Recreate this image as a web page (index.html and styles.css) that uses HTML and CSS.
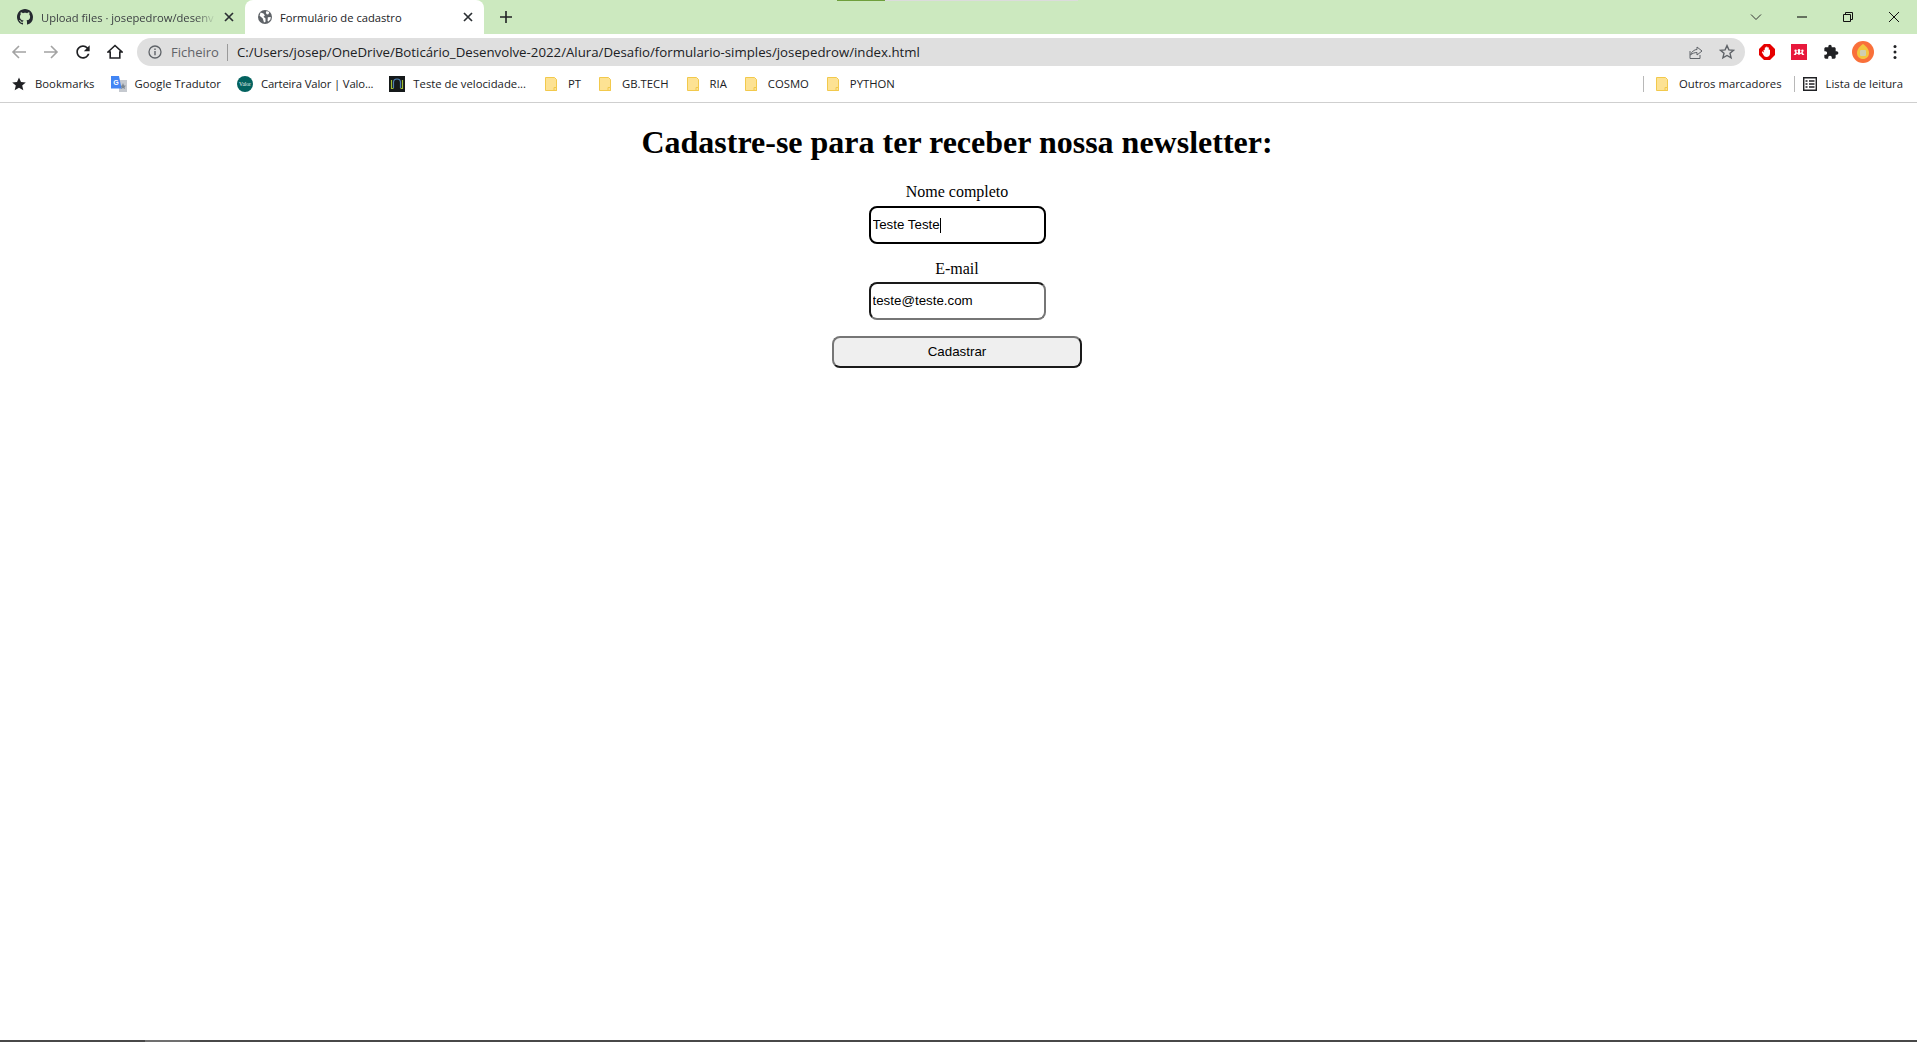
FILE: index.html
```html
<!DOCTYPE html>
<html lang="pt">
<head>
  <meta charset="UTF-8">
  <meta name="viewport" content="width=device-width, initial-scale=1.0">
  <title>Formulário de cadastro</title>
  <link rel="stylesheet" href="styles.css">
</head>
<body>
  <svg class="defs" width="0" height="0">
    <symbol id="folder" viewBox="0 0 12 14">
      <path d="M.5.5h9l2 2v11H.5z" fill="#fde293" stroke="#f2c94c"/>
      <path d="M9 13.5v-3h2.5v3z" fill="#fde293" stroke="#f2c94c"/>
    </symbol>
  </svg>

  <!-- browser window -->
  <div class="tabstrip">
    <div class="tab">
      <svg class="favicon" viewBox="0 0 16 16"><path fill="#24292f" d="M8 0C3.58 0 0 3.58 0 8c0 3.54 2.29 6.53 5.47 7.59.4.07.55-.17.55-.38 0-.19-.01-.82-.01-1.49-2.01.37-2.53-.49-2.69-.94-.09-.23-.48-.94-.82-1.13-.28-.15-.68-.52-.01-.53.63-.01 1.08.58 1.23.82.72 1.21 1.87.87 2.33.66.07-.52.28-.87.51-1.07-1.78-.2-3.64-.89-3.64-3.95 0-.87.31-1.59.82-2.15-.08-.2-.36-1.02.08-2.12 0 0 .67-.21 2.2.82.64-.18 1.32-.27 2-.27.68 0 1.36.09 2 .27 1.53-1.04 2.2-.82 2.2-.82.44 1.1.16 1.92.08 2.12.51.56.82 1.27.82 2.15 0 3.07-1.87 3.75-3.65 3.95.29.25.54.73.54 1.48 0 1.07-.01 1.93-.01 2.2 0 .21.15.46.55.38A8.013 8.013 0 0016 8c0-4.42-3.58-8-8-8z"/></svg>
      <span class="tab-title tab-title-fade">Upload files · josepedrow/desenv</span>
      <svg class="tab-close" viewBox="0 0 10 10"><path d="M1 1l8 8M9 1l-8 8" stroke="#2b2f33" stroke-width="1.7" fill="none"/></svg>
    </div>
    <div class="tab tab-active">
      <svg class="favicon" viewBox="0 0 16 16"><circle cx="8" cy="8" r="7" fill="#5f6368"/><path fill="#fff" d="M3.500 3.600l3 .9 1.400 2-1.400 1.300 2 1.800v3.200l-1.500.6-1.200-3.800-3.200-2.800zM9.500 2l2.800 1-.8 2.200-1.500.2L8.800 4zM10.800 8.200l3-.3-.4 2.700-2 2-.8-.6z"/></svg>
      <span class="tab-title">Formulário de cadastro</span>
      <svg class="tab-close" viewBox="0 0 10 10"><path d="M1 1l8 8M9 1l-8 8" stroke="#2b2f33" stroke-width="1.7" fill="none"/></svg>
    </div>
    <svg class="new-tab" viewBox="0 0 12 12"><path d="M6 0v12M0 6h12" stroke="#202124" stroke-width="1.6"/></svg>
    <div class="loader"><span class="loader-on"></span><span class="loader-off"></span></div>
    <div class="win-controls">
      <svg viewBox="0 0 12 12"><path d="M1 3.500l5 5 5-5" stroke="#333" fill="none"/></svg>
      <svg viewBox="0 0 12 12"><path d="M1 6h10" stroke="#111" stroke-width="1.100" fill="none"/></svg>
      <svg viewBox="0 0 12 12"><path d="M3.500 3V1.500h7v7H9M1.500 3.500h7v7h-7z" stroke="#111" fill="none"/></svg>
      <svg viewBox="0 0 12 12"><path d="M1 1l10 10M11 1L1 11" stroke="#111" fill="none"/></svg>
    </div>
  </div>

  <div class="toolbar">
    <svg class="tool" viewBox="0 0 16 16"><path d="M15 8H2M8 2L2 8l6 6" stroke="#a3a3a3" stroke-width="1.600" fill="none"/></svg>
    <svg class="tool" viewBox="0 0 16 16"><path d="M1 8h13M8 2l6 6-6 6" stroke="#a3a3a3" stroke-width="1.600" fill="none"/></svg>
    <svg class="tool tool-reload" viewBox="0 0 24 24"><path fill="#202124" d="M17.650 6.350C16.200 4.900 14.210 4 12 4c-4.420 0-7.990 3.580-7.990 8s3.570 8 7.990 8c3.730 0 6.840-2.550 7.730-6h-2.080c-.82 2.330-3.040 4-5.650 4-3.310 0-6-2.690-6-6s2.690-6 6-6c1.660 0 3.140.69 4.220 1.780L13 11h7V4l-2.350 2.350z"/></svg>
    <svg class="tool" viewBox="0 0 16 16"><path d="M1 8l7-6.500L15 8h-2.200v6H3.200V8z" stroke="#202124" stroke-width="1.600" fill="none"/></svg>
    <div class="omnibox">
      <svg class="omni-info" viewBox="0 0 14 14"><circle cx="7" cy="7" r="6" stroke="#5f6368" stroke-width="1.300" fill="none"/><path d="M7 6v4.200M7 3.400v1.500" stroke="#5f6368" stroke-width="1.400"/></svg>
      <span class="omni-scheme">Ficheiro</span>
      <span class="omni-url">C:/Users/josep/OneDrive/Boticário_Desenvolve-2022/Alura/Desafio/formulario-simples/josepedrow/index.html</span>
      <svg class="omni-icon" viewBox="0 0 16 16"><path d="M3 7v7.500h10V11M3.500 11C4.500 7.500 7.500 5.500 10 5.500V3L15 7l-5 4V8.500C7.500 8.500 5 9.500 3.500 11z" stroke="#5f6368" fill="none"/></svg>
      <svg class="omni-icon" viewBox="0 0 16 16"><path d="M8 1.600l1.900 4.300 4.600.4-3.500 3 1.100 4.600L8 11.500l-4.100 2.400L5 9.300l-3.500-3 4.600-.4z" stroke="#5f6368" stroke-width="1.400" fill="none"/></svg>
    </div>
    <svg class="ext" viewBox="0 0 16 16"><path fill="#e60000" d="M5 0h6l5 5v6l-5 5H5l-5-5V5z"/><path fill="#fff" d="M4.500 6.500c0-1 1.200-1 1.300 0V4c0-1 1.300-1 1.300 0V3.200c0-1 1.400-1 1.400 0V4c0-1 1.300-1 1.300 0v2c0-.8 1.200-.8 1.200 0v3.500c0 2-1.500 3.500-3.500 3.500-1.500 0-2.500-.8-3-2l-1.500-2.500c-.4-.8.600-1.400 1.200-.8l1 1z"/></svg>
    <svg class="ext" viewBox="0 0 16 16"><rect width="16" height="16" fill="#e8193c"/><circle cx="8" cy="6.200" r="1.300" fill="#fff"/><circle cx="4.600" cy="6.800" r="1.200" fill="#fff"/><circle cx="11.400" cy="6.800" r="1.200" fill="#fff"/><path fill="#fff" d="M2.500 11c1.200-.6 1.300-2.500 2.100-3.200l2.400 1.200V7h2v2l2.400-1.200c.8.7.9 2.600 2.100 3.200h-2.300l-1-1.500L8 11 5.800 9.500l-1 1.500z"/></svg>
    <svg class="ext" viewBox="0 0 24 24"><path fill="#202124" d="M20.500 11H19V7c0-1.100-.9-2-2-2h-4V3.500C13 2.120 11.880 1 10.500 1S8 2.120 8 3.500V5H4c-1.100 0-1.990.9-1.990 2v3.800H3.500c1.490 0 2.700 1.210 2.700 2.700s-1.210 2.700-2.700 2.700H2V20c0 1.100.9 2 2 2h3.800v-1.500c0-1.490 1.210-2.700 2.700-2.700 1.490 0 2.700 1.210 2.700 2.700V22H17c1.100 0 2-.9 2-2v-4h1.500c1.380 0 2.500-1.120 2.500-2.500S21.880 11 20.500 11z"/></svg>
    <svg class="ext avatar" viewBox="0 0 22 22"><circle cx="11" cy="11" r="11" fill="#f9703a"/><path fill="#f3c63f" d="M11 3c3 2 6 5 6 9 0 3.500-2.500 6-6 6s-6-2.500-6-6c0-4 3-7 6-9z"/><rect x="8" y="9" width="6" height="6" rx="1" fill="#cfcfb0"/></svg>
    <svg class="ext dots" viewBox="0 0 4 16"><circle cx="2" cy="2.500" r="1.500" fill="#202124"/><circle cx="2" cy="8" r="1.500" fill="#202124"/><circle cx="2" cy="13.500" r="1.500" fill="#202124"/></svg>
  </div>

  <div class="bookmarks">
    <a class="mark">
      <svg class="mark-icon" viewBox="0 0 16 16"><path fill="#202124" d="M8 1.500l2 4.500 4.800.4-3.600 3.200 1.100 4.700L8 11.800l-4.300 2.500 1.100-4.700L1.200 6.400 6 6z"/></svg>
      Bookmarks
    </a>
    <a class="mark">
      <svg class="mark-icon" viewBox="0 0 16 16"><path fill="#c5c9cf" d="M8 4h8v12H8z"/><path fill="#7d8791" d="M12 7l1 2.500 2 .2-1.500 1.300.5 2-2-1.100-2 1.100.5-2L9 9.700l2-.2z"/><path fill="#4285f4" d="M0 0h8l2.500 12.500H0z"/><text x="2.200" y="8.500" class="g-letter">G</text></svg>
      Google Tradutor
    </a>
    <a class="mark mark-narrow">
      <svg class="mark-icon" viewBox="0 0 16 16"><circle cx="8" cy="8" r="8" fill="#03625f"/><text x="8" y="9.800" class="valor-letters">Valor</text></svg>
      Carteira Valor | Valo...
    </a>
    <a class="mark mark-speed">
      <svg class="mark-icon" viewBox="0 0 16 16"><rect width="16" height="16" fill="#15191a"/><path d="M4.500 12V6.500a3.500 3.500 0 017 0V12" stroke="#4d7fb3" stroke-width="1.200" fill="none"/><path d="M2.500 4v8.500h2M13.500 4v8.500h-2" stroke="#9dbb32" stroke-width="1.200" fill="none"/></svg>
      Teste de velocidade...
    </a>
    <a class="mark mark-folder"><svg class="folder-icon"><use href="#folder"/></svg>PT</a>
    <a class="mark mark-folder"><svg class="folder-icon"><use href="#folder"/></svg>GB.TECH</a>
    <a class="mark mark-folder"><svg class="folder-icon"><use href="#folder"/></svg>RIA</a>
    <a class="mark mark-folder"><svg class="folder-icon"><use href="#folder"/></svg>COSMO</a>
    <a class="mark mark-folder"><svg class="folder-icon"><use href="#folder"/></svg>PYTHON</a>
    <span class="mark-sep mark-sep-first"></span>
    <a class="mark mark-folder mark-other"><svg class="folder-icon"><use href="#folder"/></svg>Outros marcadores</a>
    <span class="mark-sep mark-sep-last"></span>
    <a class="mark mark-reading">
      <svg class="mark-icon" viewBox="0 0 14 14"><path d="M.7.7h12.600v12.600H.7z" stroke="#202124" stroke-width="1.400" fill="none"/><path d="M2.500 4h2M6 4h5.500M2.500 7h2M6 7h5.500M2.500 10h2M6 10h5.500" stroke="#202124" stroke-width="1.300"/></svg>
      Lista de leitura
    </a>
  </div>

  <!-- the page itself -->
  <main class="page">
    <h1>Cadastre-se para ter receber nossa newsletter:</h1>
    <form class="form">
      <label class="label-first" for="nome">Nome completo</label>
      <div class="field">
        <input class="input input-focus" type="text" id="nome" value="Teste Teste">
        <span class="caret"></span>
      </div>
      <label for="email">E-mail</label>
      <div class="field">
        <input class="input" type="email" id="email" value="teste@teste.com">
      </div>
      <button class="btn" type="button">Cadastrar</button>
    </form>
  </main>

  <div class="taskbar"><span class="taskbar-thumb"></span></div>
</body>
</html>
```

FILE: styles.css
```css
* {
  box-sizing: border-box;
}

html, body {
  height: 100%;
}

body {
  margin: 0;
  display: flex;
  flex-direction: column;
  overflow: hidden;
  background-color: #fff;
  font-family: "Liberation Serif", serif;
}

.defs {
  position: absolute;
}

/* tabs */
.tabstrip {
  height: 34px;
  flex: none;
  display: flex;
  align-items: center;
  position: relative;
  background-color: #cce9bf;
  font-family: "Open Sans", sans-serif;
  font-size: 11.200px;
  color: #3c4043;
}

.tab {
  width: 245px;
  height: 34px;
  flex: none;
  display: flex;
  align-items: center;
  padding: 0 11px 0 17px;
}

.tab-active {
  width: 239px;
  padding: 0 11px 0 12px;
  background-color: #fff;
  border-radius: 8px 8px 0 0;
  color: #202124;
}

.favicon {
  width: 16px;
  height: 16px;
  flex: none;
}

.tab-title {
  flex: 1;
  margin: 0 8px;
  white-space: nowrap;
}

.tab-title-fade {
  -webkit-mask-image: linear-gradient(to right, #000 88%, transparent);
  mask-image: linear-gradient(to right, #000 88%, transparent);
}

.tab-active .tab-title {
  margin-left: 7px;
}

.tab-close {
  width: 10px;
  height: 10px;
  flex: none;
}

.new-tab {
  width: 12px;
  height: 12px;
  margin-left: 16px;
  flex: none;
}

.loader {
  position: absolute;
  top: 0;
  left: 837px;
  display: flex;
  height: 1px;
}

.loader-on {
  width: 48px;
  background-color: #6f9f3c;
}

.loader-off {
  width: 193px;
  background-color: #dcdcdc;
}

.win-controls {
  margin-left: auto;
  display: flex;
  align-items: center;
  gap: 34px;
  padding-right: 17px;
}

.win-controls svg {
  width: 12px;
  height: 12px;
}

/* toolbar */
.toolbar {
  height: 34px;
  flex: none;
  display: flex;
  align-items: center;
  padding: 2px 0 0 11px;
}

.tool {
  width: 16px;
  height: 16px;
  flex: none;
  margin-right: 16px;
}

.tool-reload {
  width: 20px;
  height: 20px;
  margin: 0 14px 0 -2px;
}

.omnibox {
  width: 1608px;
  height: 28px;
  flex: none;
  margin-left: -2px;
  margin-right: 14px;
  padding: 0 10px 0 11px;
  display: flex;
  align-items: center;
  background-color: #dfdfdf;
  border-radius: 14px;
  font-family: "Open Sans", sans-serif;
  font-size: 13.250px;
  white-space: nowrap;
}

.omni-info {
  width: 14px;
  height: 14px;
  flex: none;
  margin-right: 9px;
}

.omni-scheme {
  color: #5f6368;
  font-size: 13px;
  padding-right: 8px;
  margin-right: 9px;
  border-right: 1px solid #9a9a9a;
  line-height: 17px;
}

.omni-url {
  color: #202124;
  flex: 1;
}

.omni-icon {
  width: 16px;
  height: 16px;
  flex: none;
  margin-left: 16px;
}

.ext {
  width: 16px;
  height: 16px;
  flex: none;
  margin-right: 16px;
}

.avatar {
  width: 22px;
  height: 22px;
  margin: 0 19px 0 -3px;
}

.dots {
  width: 4px;
}

/* bookmarks bar */
.bookmarks {
  height: 35px;
  flex: none;
  display: flex;
  align-items: center;
  padding: 0 14px 3px 11px;
  border-bottom: 1px solid #cfcfcf;
  font-family: "Open Sans", sans-serif;
  font-size: 11.300px;
  color: #202124;
  white-space: nowrap;
}

.mark {
  display: flex;
  align-items: center;
  margin-right: 16px;
}

.mark-narrow {
  letter-spacing: -0.15px;
}

.mark-speed {
  margin-right: 19px;
}

.mark-icon {
  width: 16px;
  height: 16px;
  flex: none;
  margin-right: 8px;
}

.g-letter {
  font-family: "Liberation Sans", sans-serif;
  font-size: 7px;
  font-weight: bold;
  fill: #fff;
}

.valor-letters {
  font-family: "Liberation Serif", serif;
  font-size: 5.500px;
  letter-spacing: 0;
  text-anchor: middle;
  fill: #e8f3f2;
}

.folder-icon {
  width: 12px;
  height: 14px;
  flex: none;
  margin-right: 11px;
}

.mark-folder {
  margin-right: 18px;
}

.mark-other {
  margin-right: 12px;
}

.mark-sep {
  width: 1px;
  height: 16px;
  background-color: #b8b8b8;
  margin-right: 12px;
}

.mark-sep-first {
  margin-left: auto;
}

.mark-sep-last {
  margin-right: 8px;
}

.mark-reading {
  margin-right: 0;
}

.mark-reading .mark-icon {
  width: 14px;
  height: 14px;
  margin-right: 9px;
}

/* page content */
.page {
  flex: 1;
  padding-right: 3px;
  text-align: center;
  color: #000;
}

h1 {
  margin: 21.44px 0;
  font-size: 32px;
}

.form {
  display: flex;
  flex-direction: column;
  align-items: center;
  font-size: 16px;
}

label {
  display: block;
  line-height: 17px;
  margin-bottom: 5px;
}

.label-first {
  margin-bottom: 6px;
}

.field {
  position: relative;
  margin-bottom: 16px;
}

.input {
  display: block;
  width: 177px;
  height: 38px;
  padding: 1px 2px;
  border: 2px solid;
  border-color: #1a1a1a #767676 #767676 #1a1a1a;
  border-radius: 8px;
  font-family: "Liberation Sans", sans-serif;
  font-size: 13.333px;
  color: #000;
  background-color: #fff;
}

.input-focus {
  border-color: #000;
}

.caret {
  position: absolute;
  top: 12px;
  left: 71px;
  width: 1px;
  height: 15px;
  background-color: #000;
}

.btn {
  width: 250px;
  height: 32px;
  border: 2px solid;
  border-color: #767676 #1a1a1a #1a1a1a #767676;
  border-radius: 8px;
  background-color: #efefef;
  font-family: "Liberation Sans", sans-serif;
  font-size: 13.333px;
  color: #000;
}

.taskbar {
  height: 2px;
  flex: none;
  padding-left: 145px;
  background-color: #484848;
}

.taskbar-thumb {
  display: block;
  width: 45px;
  height: 2px;
  background-color: #707070;
}
```
